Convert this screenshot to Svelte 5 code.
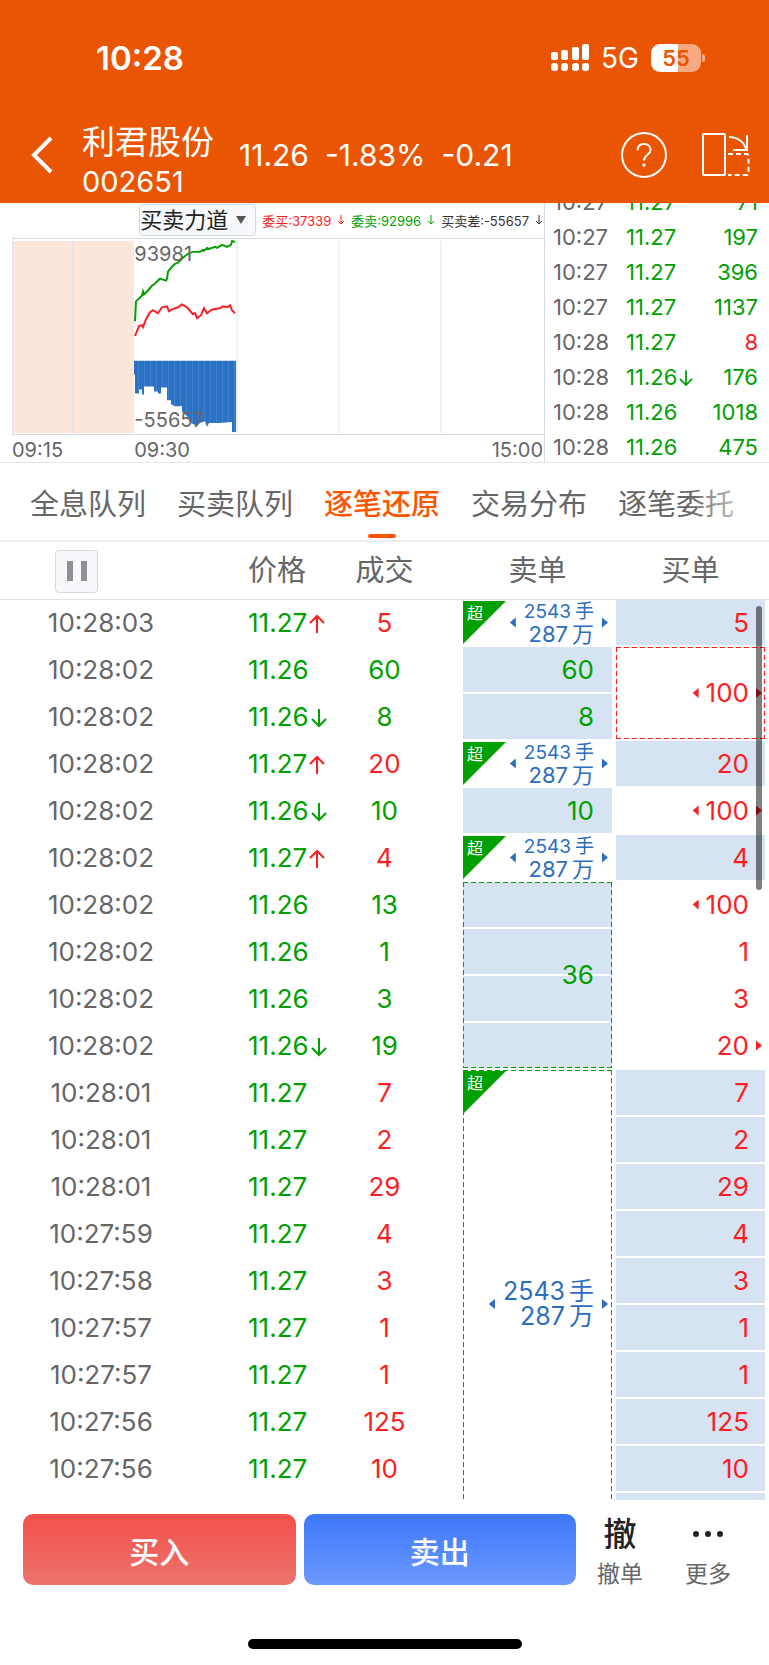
<script lang="ts">
	type Row = {
		time: string;
		price?: string;
		arrow?: 'up' | 'down';
		vol?: string;
		side?: 'red' | 'green';
		sell?: { kind: 'fill' | 'big' | 'merged' | 'bigMerged'; text?: string; span?: number };
		buy?: { text?: string; fill?: boolean; span?: number; left?: boolean; right?: boolean };
	};

	const tabs = ['全息队列', '买卖队列', '逐笔还原', '交易分布', '逐笔委托'];
	let activeTab = '逐笔还原';
	let paused = false;

	const ticks = [
		{ time: '10:27', price: '11.27', vol: '71' },
		{ time: '10:27', price: '11.27', vol: '197' },
		{ time: '10:27', price: '11.27', vol: '396' },
		{ time: '10:27', price: '11.27', vol: '1137' },
		{ time: '10:28', price: '11.27', vol: '8', red: true },
		{ time: '10:28', price: '11.26', vol: '176', down: true },
		{ time: '10:28', price: '11.26', vol: '1018' },
		{ time: '10:28', price: '11.26', vol: '475' }
	];

	const totals = [
		{ text: '委买:37339', tone: 'red' },
		{ text: '委卖:92996', tone: 'green' },
		{ text: '买卖差:-55657', tone: 'dark' }
	];

	const rows: Row[] = [
		{ time: '10:28:03', price: '11.27', arrow: 'up', vol: '5', side: 'red', sell: { kind: 'big' }, buy: { text: '5', fill: true } },
		{ time: '10:28:02', price: '11.26', vol: '60', side: 'green', sell: { kind: 'fill', text: '60' }, buy: { text: '100', span: 2, left: true, right: true } },
		{ time: '10:28:02', price: '11.26', arrow: 'down', vol: '8', side: 'green', sell: { kind: 'fill', text: '8' } },
		{ time: '10:28:02', price: '11.27', arrow: 'up', vol: '20', side: 'red', sell: { kind: 'big' }, buy: { text: '20', fill: true } },
		{ time: '10:28:02', price: '11.26', arrow: 'down', vol: '10', side: 'green', sell: { kind: 'fill', text: '10' }, buy: { text: '100', left: true, right: true } },
		{ time: '10:28:02', price: '11.27', arrow: 'up', vol: '4', side: 'red', sell: { kind: 'big' }, buy: { text: '4', fill: true } },
		{ time: '10:28:02', price: '11.26', vol: '13', side: 'green', sell: { kind: 'merged', text: '36', span: 4 }, buy: { text: '100', left: true } },
		{ time: '10:28:02', price: '11.26', vol: '1', side: 'green', buy: { text: '1' } },
		{ time: '10:28:02', price: '11.26', vol: '3', side: 'green', buy: { text: '3' } },
		{ time: '10:28:02', price: '11.26', arrow: 'down', vol: '19', side: 'green', buy: { text: '20', right: true } },
		{ time: '10:28:01', price: '11.27', vol: '7', side: 'red', sell: { kind: 'bigMerged', span: 10 }, buy: { text: '7', fill: true } },
		{ time: '10:28:01', price: '11.27', vol: '2', side: 'red', buy: { text: '2', fill: true } },
		{ time: '10:28:01', price: '11.27', vol: '29', side: 'red', buy: { text: '29', fill: true } },
		{ time: '10:27:59', price: '11.27', vol: '4', side: 'red', buy: { text: '4', fill: true } },
		{ time: '10:27:58', price: '11.27', vol: '3', side: 'red', buy: { text: '3', fill: true } },
		{ time: '10:27:57', price: '11.27', vol: '1', side: 'red', buy: { text: '1', fill: true } },
		{ time: '10:27:57', price: '11.27', vol: '1', side: 'red', buy: { text: '1', fill: true } },
		{ time: '10:27:56', price: '11.27', vol: '125', side: 'red', buy: { text: '125', fill: true } },
		{ time: '10:27:56', price: '11.27', vol: '10', side: 'red', buy: { text: '10', fill: true } },
		{ time: '', buy: { fill: true } }
	];
</script>

<div class="app">
	<header>
		<div class="status">
			<span class="clock">10:28</span>
			<div class="signals">
				<svg width="38" height="28" viewBox="0 0 38 28" fill="#fff">
					<rect x="0" y="8" width="7" height="8" rx="2" />
					<rect x="10" y="6" width="7" height="10" rx="2" />
					<rect x="21" y="3" width="7" height="13" rx="2" />
					<rect x="31" y="0" width="7" height="16" rx="2" />
					<rect x="0" y="19" width="7" height="8" rx="3" />
					<rect x="10" y="19" width="7" height="8" rx="3" />
					<rect x="21" y="19" width="7" height="8" rx="3" />
					<rect x="31" y="19" width="7" height="8" rx="3" />
				</svg>
				<span class="network">5G</span>
				<div class="battery"><span>55</span></div>
			</div>
		</div>
		<nav>
			<button class="plain" aria-label="返回">
				<svg width="22" height="38" viewBox="0 0 22 38" fill="none" stroke="#fff" stroke-width="4">
					<path d="M20 2L3 19L20 36" />
				</svg>
			</button>
			<div class="stock">
				<span class="name">利君股份</span>
				<span class="code">002651</span>
			</div>
			<div class="quote">
				<span>11.26</span>
				<span>-1.83%</span>
				<span>-0.21</span>
			</div>
			<div class="tools">
				<button class="plain" aria-label="帮助">
					<svg width="46" height="46" viewBox="0 0 46 46" fill="none" stroke="#fff" stroke-width="2">
						<circle cx="23" cy="23" r="22" />
						<path d="M16.500 18.500C16.500 14.500 19 12 23 12C27 12 29.500 14.500 29.500 18C29.500 23 23 22.500 23 28.500" />
						<circle cx="23" cy="33" r="1.800" fill="#fff" stroke="none" />
					</svg>
				</button>
				<button class="plain" aria-label="横屏">
					<svg width="48" height="46" viewBox="0 0 48 46" fill="none" stroke="#fff" stroke-width="2">
						<rect x="1" y="2" width="22" height="41" rx="1" />
						<path d="M27 5C35 5 43 10 44 18M45 3V18H31" />
						<path d="M26 22H44.500Q46.500 22 46.500 24V41Q46.500 43 44.500 43H26" stroke-dasharray="5 3" />
					</svg>
				</button>
			</div>
		</nav>
	</header>

	<section class="market">
		<div class="chart-panel">
			<div class="chart-head">
				<label class="picker">
					<select aria-label="指标">
						<option>买卖力道</option>
					</select>
					<svg width="10" height="8" viewBox="0 0 10 8"><path d="M0 0H10L5 8Z" fill="#555" /></svg>
				</label>
				{#each totals as t}
					<span class="total {t.tone}">
						{t.text}
						<svg width="8" height="10" viewBox="0 0 8 10" fill="none" stroke="currentColor">
							<path d="M4 0V9M1 6L4 9L7 6" />
						</svg>
					</span>
				{/each}
			</div>
			<div class="chart">
				<svg viewBox="0 0 532 197" preserveAspectRatio="none">
					<defs>
						<pattern id="bars" width="6" height="197" patternUnits="userSpaceOnUse">
							<rect width="6" height="197" fill="#2c72c4" />
							<rect width="1" height="197" fill="#3f82cd" />
						</pattern>
					</defs>
					<rect x="0" y="2" width="122" height="194" fill="#fce5d9" />
					<path d="M61 2V196" stroke="#e4e4e8" stroke-width="2" />
					<path d="M225 2V196M327 2V196M429 2V196" stroke="#e0e5ed" stroke-width="1" />
					<path d="M0.500 0V197" stroke="#e0e5ed" />
					<path
						fill="url(#bars)"
						d="M122 123H224V195H220V185L208 186H197L195 190L193 184L188 186L185 189L179 186L176 180L170 174V169H163L159 167V163H155V150H149V156H146V154H142V149H132V157H130V152H127V156H123V137H122Z"
					/>
					<polyline
						fill="none"
						stroke="#00a000"
						stroke-width="2"
						points="123,83 124,63 130,57 131,53 132,56 136,52 140,47 142,46 145,43 148,40 154,42 155,40 156,33 160,28 163,25 166,24 171,19 176,15 181,13 188,13 191,11 192,12 195,9 197,10 203,8 205,9 210,6 215,8 219,6 220,2 223,3"
					/>
					<polyline
						fill="none"
						stroke="#fb1e23"
						stroke-width="2"
						points="123,98 127,88 130,87 131,89 134,81 138,74 141,72 146,75 150,69 155,68 157,73 160,71 166,69 170,66 175,69 181,76 183,75 185,80 189,77 192,70 195,75 199,72 201,71 208,70 211,68 215,69 218,67 220,72 223,75"
					/>
				</svg>
				<span class="bound top">93981</span>
				<span class="bound bottom">-55657</span>
			</div>
			<div class="axis">
				<span>09:15</span>
				<span>09:30</span>
				<span>15:00</span>
			</div>
		</div>
		<div class="ticks">
			<ul>
				{#each ticks as t}
					<li>
						<span class="tick-time">{t.time}</span>
						<span class="tick-price">
							{t.price}{#if t.down}<svg class="arrow" width="14" height="18" viewBox="0 0 16 20"><path d="M8 1V18M1 11L8 18L15 11" /></svg>{/if}
						</span>
						<span class={t.red ? 'red' : 'green'}>{t.vol}</span>
					</li>
				{/each}
			</ul>
		</div>
	</section>

	<div class="tabs">
		{#each tabs as tab}
			<button class:active={tab === activeTab} on:click={() => (activeTab = tab)}>{tab}</button>
		{/each}
	</div>

	<main>
		<table>
			<colgroup>
				<col class="c-time" />
				<col class="c-price" />
				<col class="c-cell" />
				<col class="c-cell" />
				<col class="c-cell" />
			</colgroup>
			<thead>
				<tr>
					<th class="time">
						<button class="pause" aria-label="暂停" aria-pressed={paused} on:click={() => (paused = !paused)}>
							<i></i><i></i>
						</button>
					</th>
					<th>价格</th>
					<th>成交</th>
					<th>卖单</th>
					<th>买单</th>
				</tr>
			</thead>
			<tbody>
				{#each rows as row}
					<tr>
						<td class="time">{row.time}</td>
						<td class="price">
							{row.price ?? ''}{#if row.arrow}<svg class="arrow {row.arrow}" width="16" height="20" viewBox="0 0 16 20"><path d={row.arrow === 'up' ? 'M8 19V2M1 9L8 2L15 9' : 'M8 1V18M1 11L8 18L15 11'} /></svg>{/if}
						</td>
						<td class={row.side}>{row.vol ?? ''}</td>
						{#if row.sell}
							<td class="order green {row.sell.kind}" rowspan={row.sell.span ?? 1}>
								{#if row.sell.text}
									{row.sell.text}
								{:else}
									<span class="corner">超</span>
									<div class="lots">
										<i class="tri left"></i>
										<div>
											<p><span>2543</span><span>手</span></p>
											<p><span>287</span><span>万</span></p>
										</div>
										<i class="tri right"></i>
									</div>
								{/if}
							</td>
						{/if}
						{#if row.buy}
							<td class="order red" class:fill={row.buy.fill} class:boxed={row.buy.span} rowspan={row.buy.span ?? 1}>
								{#if row.buy.text}
									<div class="lots">
										{#if row.buy.left}<i class="tri left"></i>{/if}
										<span>{row.buy.text}</span>
										<i class="tri right" class:off={!row.buy.right}></i>
									</div>
								{/if}
							</td>
						{/if}
					</tr>
				{/each}
			</tbody>
		</table>
		<div class="scrollbar"></div>
	</main>

	<footer>
		<div class="actions">
			<div class="trade">
				<button class="buy">买入</button>
				<button class="sell">卖出</button>
			</div>
			<button class="side">
				<b>撤</b>
				<span>撤单</span>
			</button>
			<button class="side">
				<svg width="32" height="40" viewBox="0 0 32 40" fill="#222">
					<circle cx="4" cy="20" r="3" />
					<circle cx="16" cy="20" r="3" />
					<circle cx="28" cy="20" r="3" />
				</svg>
				<span>更多</span>
			</button>
		</div>
		<div class="home"></div>
	</footer>
</div>

<style>
	:global(body) {
		background: #fff;
	}

	.app {
		display: flex;
		flex-direction: column;
		height: 100vh;
		overflow: hidden;
		font-family: Inter, 'Noto Sans CJK SC', sans-serif;
		color: #666;
	}

	.app * {
		box-sizing: border-box;
	}

	button,
	select {
		font: inherit;
		color: inherit;
		border: none;
		background: none;
		padding: 0;
		margin: 0;
		cursor: pointer;
	}

	svg {
		display: block;
	}

	.red {
		color: #fb1e23;
	}

	.green {
		color: #00a000;
	}

	.dark {
		color: #333;
	}

	/* header */
	header {
		flex: none;
		background: #ea5504;
		color: #fff;
	}

	.status {
		display: flex;
		align-items: center;
		justify-content: space-between;
		height: 116px;
		padding: 0 64px 0 96px;
	}

	.clock {
		font-size: 33px;
		font-weight: 600;
	}

	.signals {
		display: flex;
		align-items: center;
		gap: 12px;
	}

	.network {
		font-size: 28px;
	}

	.battery {
		position: relative;
		width: 50px;
		height: 28px;
		margin-right: 4px;
		border-radius: 9px;
		background: linear-gradient(90deg, #fff 55%, #f5aa81 55%);
		color: #ea5504;
		font-size: 22px;
		font-weight: 600;
		line-height: 28px;
		text-align: center;
	}

	.battery::after {
		content: '';
		position: absolute;
		right: -4px;
		top: 10px;
		width: 3px;
		height: 8px;
		border-radius: 0 4px 4px 0;
		background: #f5aa81;
	}

	nav {
		display: flex;
		height: 87px;
		padding: 6px 19px 0 31px;
	}

	.plain,
	.quote,
	.tools {
		display: flex;
		align-items: center;
		height: 65px;
	}

	.stock {
		display: flex;
		flex-direction: column;
		margin-left: 29px;
		line-height: 40px;
	}

	.name {
		font-size: 33px;
	}

	.code {
		font-size: 29px;
	}

	.quote {
		gap: 16px;
		margin-left: 25px;
		font-size: 30px;
	}

	.tools {
		gap: 35px;
		margin-left: auto;
	}

	/* chart and tick list */
	.market {
		display: flex;
		flex: none;
		height: 260px;
		overflow: hidden;
		border-bottom: 1px solid #e4e5e9;
	}

	.chart-panel {
		flex: 1;
		min-width: 0;
		padding-left: 12px;
		border-right: 1px solid #d5d9e2;
	}

	.chart-head {
		display: flex;
		align-items: center;
		justify-content: flex-end;
		gap: 6px;
		height: 35px;
		padding: 1px 1px 2px 0;
	}

	.picker {
		position: relative;
		width: 117px;
		height: 32px;
		border: 1px solid #d5d9e2;
		border-radius: 4px;
		background: #f7f8fb;
	}

	.picker select {
		display: block;
		width: 100%;
		height: 30px;
		appearance: none;
		color: #222;
		font-size: 22px;
		line-height: 30px;
	}

	.picker svg {
		position: absolute;
		right: 9px;
		top: 11px;
		pointer-events: none;
	}

	.total {
		display: flex;
		align-items: center;
		gap: 6px;
		font-size: 13px;
		white-space: nowrap;
	}

	.chart {
		position: relative;
		height: 197px;
		border-top: 1px solid #d5d9e2;
		border-bottom: 1px solid #d5d9e2;
	}

	.chart svg {
		width: 100%;
		height: 100%;
	}

	.bound {
		position: absolute;
		left: 23%;
		font-size: 20px;
		line-height: 20px;
	}

	.bound.top {
		top: 5px;
	}

	.bound.bottom {
		bottom: 4px;
	}

	.axis {
		display: grid;
		grid-template-columns: 23% 1fr auto;
		padding-right: 1px;
		font-size: 20px;
		line-height: 30px;
	}

	.ticks {
		flex: none;
		width: 224px;
	}

	.ticks ul {
		list-style: none;
		margin: -18px 0 0;
		padding: 0 11px 0 8px;
	}

	.ticks li {
		display: flex;
		height: 35px;
		font-size: 22px;
		line-height: 35px;
	}

	.tick-time {
		width: 73px;
	}

	.tick-price {
		flex: 1;
		color: #00a000;
		white-space: nowrap;
	}

	.arrow {
		display: inline-block;
		margin-left: 2px;
		vertical-align: -2px;
		fill: none;
		stroke: #00a000;
		stroke-width: 2;
	}

	.arrow.up {
		stroke: #fb1e23;
	}

	/* tabs */
	.tabs {
		position: relative;
		display: flex;
		flex: none;
		gap: 31px;
		height: 79px;
		padding: 0 30px;
		overflow: hidden;
		border-bottom: 2px solid #ededf0;
	}

	.tabs::after {
		content: '';
		position: absolute;
		top: 0;
		right: 0;
		width: 80px;
		height: 70px;
		background: linear-gradient(90deg, transparent, #fff);
		pointer-events: none;
	}

	.tabs button {
		position: relative;
		flex: none;
		height: 77px;
		font-size: 29px;
	}

	.tabs .active {
		color: #ff5500;
		font-weight: 500;
	}

	.tabs .active::after {
		content: '';
		position: absolute;
		left: 50%;
		bottom: 2px;
		width: 28px;
		height: 4px;
		margin-left: -14px;
		border-radius: 2px;
		background: #ff5500;
	}

	/* order table */
	main {
		position: relative;
		flex: 1;
		min-height: 0;
		overflow: hidden;
	}

	table {
		width: 100%;
		table-layout: fixed;
		border-collapse: separate;
		border-spacing: 4px 2px;
		background: linear-gradient(#dfe1e6, #dfe1e6) 0 57px / 100% 1px no-repeat;
		font-size: 26px;
		line-height: 30px;
	}

	.c-price {
		width: 58px;
	}

	.c-cell {
		width: 20%;
	}

	th {
		height: 54px;
		padding: 0;
		font-size: 29px;
		font-weight: 400;
		white-space: nowrap;
	}

	td {
		height: 45px;
		padding: 0;
		text-align: center;
		white-space: nowrap;
	}

	.time {
		padding-right: 50px;
		padding-left: 4px;
	}

	th.time {
		text-align: left;
		padding-left: 51px;
	}

	.pause {
		display: flex;
		align-items: center;
		justify-content: center;
		gap: 8px;
		width: 43px;
		height: 43px;
		border: 1px solid #d5d9e2;
		border-radius: 4px;
		background: #f7f8fb;
	}

	.pause i {
		width: 6px;
		height: 20px;
		background: #8f9097;
	}

	.price {
		color: #00a000;
		text-align: left;
	}

	.order {
		position: relative;
		padding-right: 18px;
		text-align: right;
	}

	.order.red {
		padding-right: 3px;
	}

	.big,
	.bigMerged {
		padding-right: 4px;
	}

	.fill {
		background: #d6e3f3;
	}

	/* four dashed edges, then the row stripes below them */
	.merged,
	.bigMerged,
	.boxed {
		--dash-x: repeating-linear-gradient(90deg, currentColor 0 5px, transparent 5px 8px);
		--dash-y: repeating-linear-gradient(currentColor 0 5px, transparent 5px 8px);
		--rows: linear-gradient(transparent, transparent);
		background:
			var(--dash-x) 0 0 / 100% 1px no-repeat,
			var(--dash-x) 0 100% / 100% 1px no-repeat,
			var(--dash-y) 0 0 / 1px 100% no-repeat,
			var(--dash-y) 100% 0 / 1px 100% no-repeat,
			var(--rows);
	}

	.merged {
		--rows: repeating-linear-gradient(#d6e3f3 0 45px, #fff 45px 47px);
	}

	.lots {
		display: flex;
		align-items: center;
		justify-content: flex-end;
		gap: 8px;
	}

	.red .lots {
		gap: 7px;
	}

	.lots p {
		display: flex;
		justify-content: flex-end;
		gap: 4px;
		margin: 0;
		font-size: 25px;
		line-height: 25px;
	}

	.big .lots p {
		font-size: 22px;
		line-height: 22px;
	}

	.big .lots p:first-child {
		font-size: 19px;
	}

	.big .lots,
	.bigMerged .lots {
		color: #2b6dc0;
	}

	.tri {
		width: 6px;
		height: 10px;
		background: currentColor;
	}

	.tri.left {
		clip-path: polygon(100% 0, 100% 100%, 0 50%);
	}

	.tri.right {
		clip-path: polygon(0 0, 100% 50%, 0 100%);
	}

	.tri.off {
		visibility: hidden;
	}

	.corner {
		position: absolute;
		top: 1px;
		left: 0;
		width: 43px;
		height: 43px;
		padding: 3px 0 0 4px;
		background: #00a000;
		clip-path: polygon(0 0, 100% 0, 0 100%);
		color: #fff;
		font-size: 16px;
		line-height: 18px;
		text-align: left;
	}

	.scrollbar {
		position: absolute;
		top: 64px;
		right: 7px;
		width: 6px;
		height: 284px;
		border-radius: 3px;
		background: rgba(0, 0, 0, 0.5);
	}

	/* bottom bar */
	footer {
		flex: none;
		padding-top: 14px;
	}

	.actions {
		display: flex;
		padding: 0 17px 0 23px;
	}

	.trade {
		display: flex;
		flex: 1;
		gap: 8px;
	}

	.trade button {
		flex: 1;
		height: 71px;
		border-radius: 10px;
		color: #fff;
		font-size: 30px;
		font-weight: 500;
	}

	.buy {
		background: linear-gradient(#f4504a, #ec736d);
	}

	.sell {
		background: linear-gradient(#3c78fa, #6c98fd);
	}

	.side {
		display: flex;
		flex-direction: column;
		align-items: center;
		width: 88px;
		font-size: 23px;
		line-height: 40px;
	}

	.side b {
		color: #222;
		font-size: 33px;
		font-weight: 500;
	}

	.home {
		width: 274px;
		height: 10px;
		margin: 45px auto 16px;
		border-radius: 5px;
		background: #000;
	}
</style>
